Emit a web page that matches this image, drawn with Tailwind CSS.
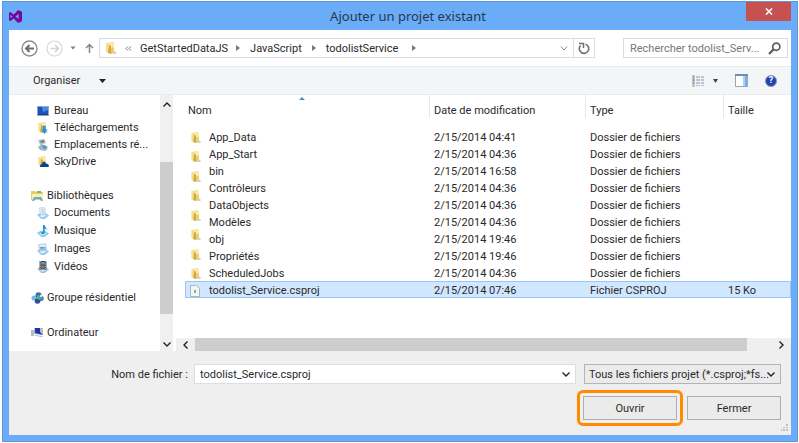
<!DOCTYPE html>
<html lang="fr">
<head>
<meta charset="utf-8">
<title>Ajouter un projet existant</title>
<script src="https://cdn.jsdelivr.net/npm/@tailwindcss/browser@4"></script>
</head>
<body class="flex h-screen bg-white pt-px pr-px pb-px pl-[2px] font-[Roboto,'Open_Sans',sans-serif] text-[11px] leading-[17px] text-[#2a2a2a]">

<svg class="hidden" aria-hidden="true">
  <symbol id="folder" viewBox="0 0 12 13">
    <path d="M1 1h4v10l-4-1z" fill="#f3df8c"/>
    <path d="M4 0h5v10H4z" fill="#f9e9a4"/>
    <path d="M4 3l2 1v8l-3-1z" fill="#d0a94a"/>
    <path d="M6 6l3-1v6l-3 1z" fill="#eccd68"/>
    <path d="M9 9l2 1v2H8z" fill="#cfd0d0"/>
  </symbol>
  <symbol id="stand" viewBox="0 0 14 14">
    <path d="M0 9l4-2h6l4 3-5 4H5z" fill="#8fc8ee"/>
    <path d="M3 10l3-1h4l1 1-3 2H5z" fill="#d9effb"/>
  </symbol>
</svg>

<div class="flex min-w-0 flex-1 flex-col border border-[#5c97d8] bg-[#6aacf7] px-[6px] pb-[6px]">
  <header class="relative flex h-[28px] shrink-0 items-center justify-center pl-[16px]">
    <svg class="absolute top-[8px] left-0 h-[13px] w-[13px]" viewBox="0 0 13 13"><path fill="#730a9c" fill-rule="evenodd" d="M9 0l4 1.700v9.600L9 13 4.800 8.600 1.500 11 0 10.200V2.800L1.500 2l3.300 2.400zM9.500 4L6.500 6.500l3 2.500zM1.500 4.700v3.600l1.900-1.800z"/></svg>
    <h1 class="font-['Noto_Sans','Open_Sans',sans-serif] text-[13px] text-[#26384f]">Ajouter un projet existant</h1>
    <button aria-label="Fermer la fenêtre" class="absolute top-0 right-0 flex h-[19px] w-[45px] items-center justify-center bg-[#c75050]">
      <svg class="h-[7px] w-[8px]" viewBox="0 0 8 7"><path d="M1 .5l6 6M7 .5l-6 6" stroke="#fff" stroke-width="1.600"/></svg>
    </button>
  </header>

  <main class="flex min-h-0 flex-1 flex-col bg-white">
    <nav class="flex h-[36px] shrink-0 items-center pr-[3px] pl-[12px]">
      <button aria-label="Précédent" class="w-[17px]"><svg class="h-[17px] w-[17px]" viewBox="0 0 17 17" fill="none"><circle cx="8.500" cy="8.500" r="7.500" stroke="#8c8c8c" stroke-width="1.400"/><path d="M13 8.500H5M8.500 5L5 8.500 8.500 12" stroke="#6c6c6c" stroke-width="1.900"/></svg></button>
      <button aria-label="Suivant" class="ml-[8px] w-[17px]"><svg class="h-[17px] w-[17px]" viewBox="0 0 17 17" fill="none"><circle cx="8.500" cy="8.500" r="7.500" stroke="#d6d6d6" stroke-width="1.200"/><path d="M4.500 8.500h8M9 5l3.500 3.500L9 12" stroke="#d3d3d3" stroke-width="1.600"/></svg></button>
      <button aria-label="Emplacements récents" class="ml-[7px] w-[6px]"><svg class="h-[4px] w-[6px]" viewBox="0 0 6 4"><path d="M.5.500h5L3 3.500z" fill="#808080"/></svg></button>
      <button aria-label="Niveau supérieur" class="ml-[9px] w-[9px]"><svg class="h-[10px] w-[9px]" viewBox="0 0 9 10" fill="none"><path d="M4.500 10V1.500M1 5l3.500-3.500L8 5" stroke="#858585" stroke-width="1.500"/></svg></button>
      <div class="ml-[5px] flex h-[20px] min-w-0 flex-1 items-center border border-[#dadbe6] pl-[5px]">
        <svg class="h-[13px] w-[12px]"><use href="#folder"/></svg>
        <svg class="ml-[8px] h-[5px] w-[7px]" viewBox="0 0 7 5" fill="none"><path d="M3 .5l-2 2 2 2M6 .5l-2 2 2 2" stroke="#777"/></svg>
        <button class="ml-[8px]">GetStartedDataJS</button>
        <svg class="ml-[8px] h-[6px] w-[4px]" viewBox="0 0 4 6"><path d="M0 0l4 3-4 3z" fill="#777"/></svg>
        <button class="ml-[10px]">JavaScript</button>
        <svg class="ml-[10px] h-[6px] w-[4px]" viewBox="0 0 4 6"><path d="M0 0l4 3-4 3z" fill="#777"/></svg>
        <button class="ml-[10px]">todolistService</button>
        <svg class="ml-[14px] h-[6px] w-[4px]" viewBox="0 0 4 6"><path d="M0 0l4 3-4 3z" fill="#777"/></svg>
        <button aria-label="Historique" class="mr-[5px] ml-auto"><svg class="h-[5px] w-[8px]" viewBox="0 0 8 5" fill="none"><path d="M1 .5l3 3.500 3-3.500" stroke="#888"/></svg></button>
      </div>
      <button aria-label="Actualiser" class="flex h-[20px] w-[21px] items-center justify-center border border-l-0 border-[#dadbe6]"><svg class="h-[13px] w-[12px]" viewBox="0 0 12 13" fill="none"><path d="M7.500 2.200A4.700 4.700 0 1 1 2.500 3.500" stroke="#6f6f6f" stroke-width="1.600"/><path d="M1 1.500h4.500V6" stroke="#6f6f6f" stroke-width="1.500"/></svg></button>
      <label class="ml-[28px] flex h-[20px] w-[165px] items-center border border-[#dadbe6] pr-[6px] pl-[6px]">
        <input aria-label="Rechercher" placeholder="Rechercher todolist_Serv..." class="min-w-0 flex-1 outline-none placeholder:text-[#777]">
        <svg class="h-[13px] w-[13px] shrink-0" viewBox="0 0 13 13" fill="none"><circle cx="8.300" cy="4.700" r="3.600" stroke="#5f5f5f" stroke-width="1.700"/><path d="M5.600 7.400L1 12" stroke="#5f5f5f" stroke-width="2.300"/></svg>
      </label>
    </nav>

    <div class="flex h-[29px] shrink-0 items-center border-y border-[#e7eaee] bg-[#f4f5f7] pr-[14px] pl-[24px]">
      <button class="flex items-center">Organiser<svg class="ml-[19px] h-[4px] w-[8px]" viewBox="0 0 8 4"><path d="M0 0h7L3.500 4z" fill="#222"/></svg></button>
      <button aria-label="Affichage" class="ml-auto flex items-center">
        <svg class="h-[12px] w-[13px]" viewBox="0 0 13 12"><path fill="#bcc3d2" d="M4 1h4v2H4zM9 1h3v2H9zM4 4h4v2H4zM9 4h3v2H9zM4 7h4v2H4zM9 7h3v2H9zM4 10h4v1H4zM9 10h3v1H9z"/><path fill="#c0c6cc" d="M0 0h3v12H0z"/><path fill="#6ab27b" d="M1 1h1v2H1zM1 7h1v2H1z"/><path fill="#cc6a60" d="M1 4h1v2H1z"/></svg>
        <svg class="ml-[8px] h-[4px] w-[5px]" viewBox="0 0 5 4"><path d="M0 0h5L2.500 4z" fill="#34465c"/></svg>
      </button>
      <button aria-label="Volet de visualisation" class="ml-[17px]"><svg class="h-[13px] w-[13px]" viewBox="0 0 13 13"><path fill="#fff" stroke="#9aa5b1" d="M.5.500h12v12H.5z"/><path fill="#6d8fb5" d="M0 0h13v2H0z"/><path fill="#a5d6f8" d="M8 2h4v10H8z"/><path fill="#6fb2ec" d="M10 2h2v10h-2z"/></svg></button>
      <button aria-label="Aide" class="ml-[17px] flex h-[12px] w-[12px] items-center justify-center rounded-full border border-[#8795b8] bg-[#1f44b0] text-[9px] leading-none font-bold text-white">?</button>
    </div>

    <section class="flex min-h-0 flex-1">
      <aside class="min-w-0 w-[151px] shrink-0 pt-[7px]">
        <ul class="pl-[28px]">
          <li class="flex items-center gap-[5px]"><svg class="h-[12px] w-[12px]" viewBox="0 0 12 12"><path fill="#8aa9d3" d="M0 1h12v10H0z"/><path fill="#1f52b3" d="M1 2h10v7H1z"/><path fill="#4a8be2" d="M5 2h6v3L6 7z"/><path fill="#1b3c78" d="M1 9h10v1H1z"/></svg>Bureau</li>
          <li class="flex items-center gap-[5px]"><svg class="h-[12px] w-[12px]" viewBox="0 0 12 13"><use href="#folder" width="12" height="13"/><path fill="#2497dd" d="M6 4h3v4h2l-3.500 5L4 8h2z"/></svg>Téléchargements</li>
          <li class="flex items-center gap-[5px] whitespace-nowrap"><svg class="h-[12px] w-[12px]" viewBox="0 0 12 12"><path fill="#b9c2c8" d="M1 1l6-1 2 4-6 2z"/><path fill="#6f8390" d="M3 2l4-1 1 2-4 1z"/><path fill="#9fb4c1" d="M1 8l4-3 6 3-2 4-6-1z"/><path fill="#4a9cc9" d="M5 7l3-1 2 3-3 1z"/></svg>Emplacements ré...</li>
          <li class="flex items-center gap-[5px]"><svg class="h-[12px] w-[12px]" viewBox="0 0 12 13"><use href="#folder" width="12" height="13"/><path fill="#123f94" d="M3 12c-1-3 2-3 2-4 1-3 4-2 4 0 3 0 4 2 3 4z"/></svg>SkyDrive</li>
        </ul>
        <h2 class="mt-[17px] flex items-center gap-[3px] pl-[22px]"><svg class="h-[12px] w-[13px]" viewBox="0 0 13 12"><path fill="#e9cc69" d="M0 1h4l1 1h7v8H0z"/><path fill="#fbeeb0" d="M1 4h11v5H1z"/><path fill="#74bd72" d="M6 1h4v2H6z"/><path fill="#63aee0" d="M3 7h7l2 4h-2L8.500 9h-4L3 11H1z"/></svg>Bibliothèques</h2>
        <ul class="pl-[28px] leading-[18px]">
          <li class="flex items-center gap-[5px]"><svg class="h-[12px] w-[12px]" viewBox="0 0 14 14"><use href="#stand"/><path fill="#f5fafd" stroke="#8fb0c6" stroke-width=".6" d="M3 1h6l1 8H4z"/><path stroke="#8fb4d2" d="M5 3h3M5 5h3M5.500 7H9"/></svg>Documents</li>
          <li class="flex items-center gap-[5px]"><svg class="h-[12px] w-[12px]" viewBox="0 0 14 14"><use href="#stand"/><path fill="#2a8fd4" d="M7 0h2c0 2 3 3 2 6-1-2-1-2-2-2v5c0 3-5 2-4 0 0-1 2-1 2-1z"/></svg>Musique</li>
          <li class="flex items-center gap-[5px]"><svg class="h-[12px] w-[12px]" viewBox="0 0 14 14"><use href="#stand"/><path fill="#eef6fb" stroke="#8aa9bd" stroke-width=".7" d="M2 2l8-1 1 6-8 1z"/><path fill="#64a9c9" d="M3 5l3-1 4 1v1.500L4 7z"/></svg>Images</li>
          <li class="flex items-center gap-[5px]"><svg class="h-[12px] w-[12px]" viewBox="0 0 14 14"><use href="#stand"/><path fill="#39434d" d="M3 0h8v10H3z"/><path fill="#5b9cd0" d="M5 1h4v3H5z"/><path fill="#a66a4c" d="M5 5h4v4H5z"/><path stroke="#cbd3da" stroke-dasharray="1 1" d="M4 0v10M10 0v10"/></svg>Vidéos</li>
        </ul>
        <h2 class="mt-[13px] flex items-center gap-[3px] pl-[22px]"><svg class="h-[12px] w-[13px]" viewBox="0 0 13 12"><circle cx="3" cy="6" r="2.500" fill="#77b6e8"/><circle cx="7.500" cy="3.200" r="3" fill="#3c6cbd"/><circle cx="10" cy="6.500" r="2.800" fill="#4b86bf"/><circle cx="6.500" cy="9" r="2.800" fill="#2b4fa0"/><path fill="#57b557" d="M6 3l4 1-1 4-3-1z"/><circle cx="10" cy="4" r="1.200" fill="#d5ecd5"/></svg>Groupe résidentiel</h2>
        <h2 class="mt-[18px] flex items-center gap-[3px] pl-[22px]"><svg class="h-[12px] w-[13px]" viewBox="0 0 13 12"><path fill="#b9bec5" d="M0 3h3v6H0zM3 1h9v7l-9-1z"/><path fill="#1937b5" d="M4 1h5v4l3 3-8-2z"/><path fill="#a5abb3" d="M3 8l8 1 1 1-7-1z"/></svg>Ordinateur</h2>
      </aside>
      <div class="flex w-[13px] shrink-0 flex-col items-center bg-[#f0f0f0]" aria-hidden="true">
        <svg class="mt-[7px] h-[5px] w-[8px]" viewBox="0 0 8 5" fill="none"><path d="M.5 4.500L4 1l3.500 3.500" stroke="#222" stroke-width="1.400"/></svg>
        <div class="mt-[55px] min-h-0 w-full flex-1 bg-[#cdcdcd]"></div>
        <svg class="mt-[28px] mb-[4px] h-[5px] w-[8px]" viewBox="0 0 8 5" fill="none"><path d="M.5.500L4 4 7.500.500" stroke="#222" stroke-width="1.400"/></svg>
      </div>

      <div class="ml-[3px] flex min-w-0 flex-1 flex-col">
        <div class="relative min-h-0 flex-1 pl-[9px]">
          <svg class="absolute top-[2px] left-[123px] h-[3px] w-[6px]" viewBox="0 0 6 3"><path d="M3 0l3 3H0z" fill="#4b8fc9"/></svg>
          <table class="w-full table-fixed border-collapse text-left leading-[15px] whitespace-nowrap">
            <colgroup><col class="w-[24px]"><col class="w-[220px]"><col class="w-[156px]"><col class="w-[138px]"><col></colgroup>
            <thead>
              <tr class="h-[23px] *:p-0 *:font-normal">
                <th colspan="2"><div class="pt-[8px] pl-[3px]">Nom</div></th>
                <th><div class="border-l border-[#e6e8ec] pt-[8px] pl-[4px]">Date de modification</div></th>
                <th><div class="border-l border-[#e6e8ec] pt-[8px] pl-[4px]">Type</div></th>
                <th><div class="border-l border-[#e6e8ec] pt-[8px] pl-[4px]">Taille</div></th>
              </tr>
              <tr class="h-[10px]"><td colspan="5" class="p-0"></td></tr>
            </thead>
            <tbody class="[&_td]:p-0 [&_td]:pt-[2px] [&_td]:pl-[5px] [&_td:nth-last-child(4)]:pl-0">
              <tr class="h-[17px]">
                <td rowspan="9" class="align-top">
                  <div class="flex h-[150px] flex-col justify-between pt-[2px]">
                    <svg class="h-[12px] w-[12px]"><use href="#folder"/></svg>
                    <svg class="h-[12px] w-[12px]"><use href="#folder"/></svg>
                    <svg class="h-[12px] w-[12px]"><use href="#folder"/></svg>
                    <svg class="h-[12px] w-[12px]"><use href="#folder"/></svg>
                    <svg class="h-[12px] w-[12px]"><use href="#folder"/></svg>
                    <svg class="h-[12px] w-[12px]"><use href="#folder"/></svg>
                    <svg class="h-[12px] w-[12px]"><use href="#folder"/></svg>
                    <svg class="h-[12px] w-[12px]"><use href="#folder"/></svg>
                  </div>
                </td>
                <td>App_Data</td><td>2/15/2014 04:41</td><td>Dossier de fichiers</td><td></td></tr>
              <tr class="h-[17px]"><td>App_Start</td><td>2/15/2014 04:36</td><td>Dossier de fichiers</td><td></td></tr>
              <tr class="h-[17px]"><td>bin</td><td>2/15/2014 16:58</td><td>Dossier de fichiers</td><td></td></tr>
              <tr class="h-[17px]"><td>Contrôleurs</td><td>2/15/2014 04:36</td><td>Dossier de fichiers</td><td></td></tr>
              <tr class="h-[17px]"><td>DataObjects</td><td>2/15/2014 04:36</td><td>Dossier de fichiers</td><td></td></tr>
              <tr class="h-[17px]"><td>Modèles</td><td>2/15/2014 04:36</td><td>Dossier de fichiers</td><td></td></tr>
              <tr class="h-[17px]"><td>obj</td><td>2/15/2014 19:46</td><td>Dossier de fichiers</td><td></td></tr>
              <tr class="h-[17px]"><td>Propriétés</td><td>2/15/2014 19:46</td><td>Dossier de fichiers</td><td></td></tr>
              <tr class="h-[17px]"><td>ScheduledJobs</td><td>2/15/2014 04:36</td><td>Dossier de fichiers</td><td></td></tr>
              <tr class="h-[17px] bg-[#d1e7ff] outline-1 -outline-offset-1 outline-[#98c8f0]"><td><svg class="h-[12px] w-[10px]" viewBox="0 0 10 12"><path fill="#f3f6f6" stroke="#a9b6bd" d="M.5.500h6l3 3v8h-9z"/><path fill="#6bc47a" d="M4 5h2v3H4z"/></svg></td><td>todolist_Service.csproj</td><td>2/15/2014 07:46</td><td>Fichier CSPROJ</td><td>15 Ko</td></tr>
            </tbody>
          </table>
        </div>
        <div class="flex h-[13px] shrink-0 items-center bg-[#efefef]" aria-hidden="true">
          <svg class="ml-[7px] h-[8px] w-[5px]" viewBox="0 0 5 8" fill="none"><path d="M4.500.500L1 4l3.500 3.500" stroke="#222" stroke-width="1.400"/></svg>
          <div class="ml-[7px] h-full flex-1 bg-[#cdcdcd]"></div>
          <svg class="mr-[7px] ml-[32px] h-[8px] w-[5px]" viewBox="0 0 5 8" fill="none"><path d="M.5.500L4 4 .5 7.500" stroke="#222" stroke-width="1.400"/></svg>
        </div>
      </div>
    </section>

    <footer class="relative flex h-[84px] shrink-0 flex-col bg-[#efefef] pt-[13px] pr-[10px]">
      <div class="flex h-[20px] items-center">
        <label for="filename" class="w-[179px] text-right">Nom de fichier :</label>
        <div class="ml-[6px] flex h-[20px] min-w-0 flex-1 items-center border border-[#dcdde8] bg-white pr-[5px] pl-[5px]">
          <input id="filename" value="todolist_Service.csproj" class="min-w-0 flex-1 outline-none">
          <button aria-label="Fichiers récents"><svg class="h-[5px] w-[8px]" viewBox="0 0 8 5" fill="none"><path d="M.5.500L4 4 7.500.500" stroke="#222" stroke-width="1.400"/></svg></button>
        </div>
        <div class="relative ml-[8px] h-[20px] w-[197px]">
          <select aria-label="Type de fichier" class="h-full w-full appearance-none border border-[#b4b4b8] bg-[#ebebeb] pl-[4px]"><option>Tous les fichiers projet (*.csproj;*fs...</option></select>
          <svg class="pointer-events-none absolute top-[8px] right-[6px] h-[5px] w-[8px]" viewBox="0 0 8 5" fill="none"><path d="M.5.500L4 4 7.500.500" stroke="#222" stroke-width="1.400"/></svg>
        </div>
      </div>
      <div class="mt-[6px] flex items-center justify-end">
        <div class="rounded-[6px] border-3 border-[#ff8c00] p-[3px]">
          <button class="block h-[24px] w-[94px] border border-[#b0b0b0] bg-[#ebebeb]">Ouvrir</button>
        </div>
        <button class="ml-[4px] h-[24px] w-[94px] border border-[#b0b0b0] bg-[#ebebeb]">Fermer</button>
      </div>
      <svg class="absolute right-[3px] bottom-[4px] h-[7px] w-[7px]" viewBox="0 0 7 7"><path fill="#bdbdbd" d="M5 0h2v2H5zM5 3h2v1H5zM2 3h2v1H2zM5 5h2v2H5zM2 5h2v2H2zM0 5h1v2H0z"/></svg>
    </footer>
  </main>
</div>
</body>
</html>
